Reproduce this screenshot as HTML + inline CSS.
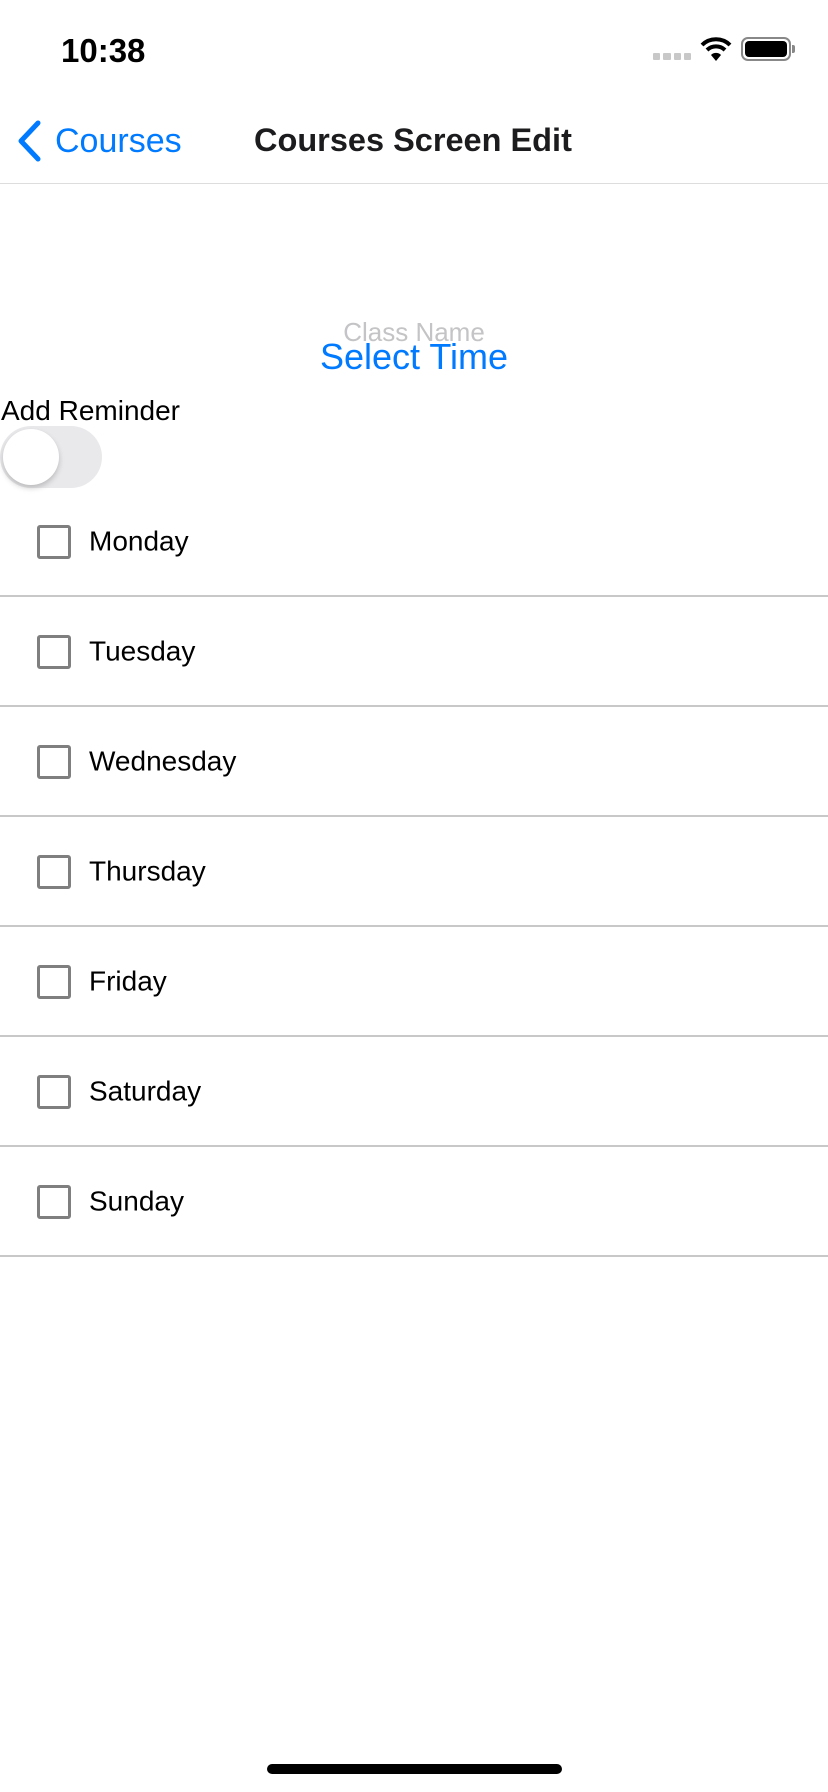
<!DOCTYPE html>
<html><head><meta charset="utf-8"><style>
*{margin:0;padding:0;box-sizing:border-box}
body{width:828px;height:1792px;background:#fff;font-family:"Liberation Sans",sans-serif;position:relative;overflow:hidden;color:#000}
.a{position:absolute;white-space:nowrap}
.row{position:absolute;left:0;width:828px;height:110px;border-bottom:2px solid #c8c8c8}
.cb{position:absolute;left:37px;top:50%;margin-top:-16px;width:34px;height:34px;border:3px solid #7f7f7f;border-radius:3px}
.lbl{position:absolute;left:89px;top:50%;transform:translateY(-48%);font-size:28px}
</style></head><body>
<div class="a" style="left:61px;top:32px;font-size:33px;font-weight:bold">10:38</div>
<div class="a" style="left:653px;top:53px;width:38px;height:7px;display:flex;gap:3px">
<i style="flex:1;background:#c8c8c8;border-radius:1px"></i><i style="flex:1;background:#c8c8c8;border-radius:1px"></i><i style="flex:1;background:#c8c8c8;border-radius:1px"></i><i style="flex:1;background:#c8c8c8;border-radius:1px"></i></div>
<svg class="a" style="left:700px;top:36px" width="32" height="26" viewBox="0 0 32 26"><path d="M2 9 A20 20 0 0 1 30 9" stroke="#000" stroke-width="4" fill="none"/><path d="M7 14 A13 13 0 0 1 25 14" stroke="#000" stroke-width="4" fill="none"/><path d="M11 19 L16 25 L21 19 A7 7 0 0 0 11 19Z" fill="#000"/></svg>
<div class="a" style="left:741px;top:37px;width:50px;height:24px;border:2px solid #888;border-radius:7px;padding:2px"><div style="width:100%;height:100%;background:#000;border-radius:4px"></div></div>
<div class="a" style="left:792px;top:45px;width:3px;height:8px;background:#888;border-radius:0 2px 2px 0"></div>
<svg class="a" style="left:14px;top:120px" width="30" height="42" viewBox="0 0 30 42"><path d="M24 3 L7 21 L24 39" stroke="#007aff" stroke-width="5" fill="none" stroke-linecap="round" stroke-linejoin="round"/></svg>
<div class="a" style="left:55px;top:122px;font-size:34px;color:#007aff">Courses</div>
<div class="a" style="left:254px;top:122px;font-size:32.5px;font-weight:bold;color:#1c1c1e">Courses Screen Edit</div>
<div class="a" style="left:0;top:183px;width:828px;height:1px;background:#ddd"></div>
<div class="a" style="left:0;width:828px;text-align:center;top:317px;font-size:26px;color:#c4c4c6">Class Name</div>
<div class="a" style="left:0;width:828px;text-align:center;top:336px;font-size:36px;color:#007aff">Select Time</div>
<div class="a" style="left:1px;top:395px;font-size:28px">Add Reminder</div>
<div class="a" style="left:0;top:426px;width:102px;height:62px;border-radius:31px;background:#e9e9eb"><div style="position:absolute;left:3px;top:3px;width:56px;height:56px;border-radius:50%;background:#fff;box-shadow:0 3px 6px rgba(0,0,0,.2)"></div></div>
<div class="row" style="top:487px"><div class="cb"></div><div class="lbl">Monday</div></div>
<div class="row" style="top:597px"><div class="cb"></div><div class="lbl">Tuesday</div></div>
<div class="row" style="top:707px"><div class="cb"></div><div class="lbl">Wednesday</div></div>
<div class="row" style="top:817px"><div class="cb"></div><div class="lbl">Thursday</div></div>
<div class="row" style="top:927px"><div class="cb"></div><div class="lbl">Friday</div></div>
<div class="row" style="top:1037px"><div class="cb"></div><div class="lbl">Saturday</div></div>
<div class="row" style="top:1147px"><div class="cb"></div><div class="lbl">Sunday</div></div>
<div class="a" style="left:267px;top:1764px;width:295px;height:10px;border-radius:5px;background:#000"></div>
</body></html>
